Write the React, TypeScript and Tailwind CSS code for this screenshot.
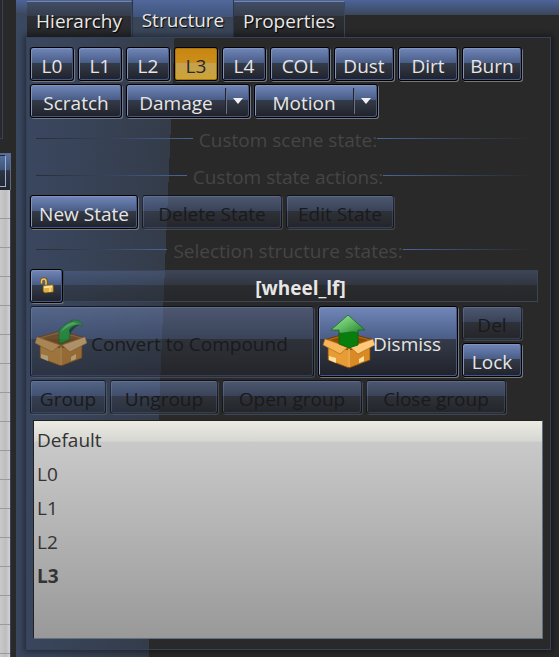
import type { ReactNode } from "react";
import { clsx } from "clsx";

const cell = "flex items-center justify-center rounded-[3px] border";
const raised =
  "border-black shadow-[inset_1px_1px_0_#7f93bd,inset_-1px_-1px_0_#42588a,1px_1px_0_#77777a,-1px_0_0_#333b4a]";
const face =
  "bg-[linear-gradient(#7187b8_0%,#4a5d88_46%,#343b49_47%,#20222a_100%)] text-[#e6e6e6]";
const faceActive =
  "border-black bg-[linear-gradient(#c8860f_0%,#cb8f1c_46%,#c4a153_47%,#cda433_100%)] text-[#26292e] shadow-[inset_0_0_0_1px_#a87510,1px_1px_0_#555]";
const faceDisabled =
  "border-[#00000080] bg-[linear-gradient(#7187b880_0%,#4a5d8880_46%,#343b4980_47%,#20222a80_100%)] text-[#191a1c] shadow-[inset_1px_1px_0_#7f93bd50,inset_-1px_-1px_0_#42588a80,1px_1px_0_#77777a60]";

type KeyProps = {
  children?: ReactNode;
  width: string;
  height?: string;
  active?: boolean;
  disabled?: boolean;
  align?: string;
  label?: string;
};

function Key({ children, width, height = "h-[34px]", active, disabled, align = "justify-center pt-[3px]", label }: KeyProps) {
  return (
    <button
      type="button"
      disabled={disabled}
      aria-label={label}
      aria-pressed={active}
      className={clsx(
        "flex shrink-0 items-center rounded-[3px] border whitespace-nowrap",
        width,
        height,
        align,
        active ? faceActive : disabled ? faceDisabled : [raised, face]
      )}
    >
      {children}
    </button>
  );
}

function SplitKey({ children }: { children: string }) {
  return (
    <div className={clsx(cell, raised, face, "h-[34px] w-[124px] shrink-0")}>
      <button type="button" className="h-full grow pt-[3px]">
        {children}
      </button>
      <span className="h-[26px] w-[2px] border-l border-[#20242c] bg-[#68728a]" />
      <button type="button" aria-label={`${children} options`} className="flex h-full w-[22px] items-center justify-center">
        <svg width="10" height="6" viewBox="0 0 10 6">
          <path d="M0 0H10L5 6Z" fill="#f0f0f0" />
        </svg>
      </button>
    </div>
  );
}

function Divider({ children }: { children: string }) {
  return (
    <div className="mr-[13px] ml-[6px] flex h-[36px] items-center text-[#454545]">
      <span className="mb-[3px] h-px grow bg-linear-to-r from-[#2b2e33] via-[#364460] to-[#4a659a]" />
      <span className="pl-[6px]">{children}</span>
      <span className="mb-[3px] h-px grow bg-linear-to-r from-[#4a659a] via-[#364460] to-transparent" />
    </div>
  );
}

function Padlock() {
  return (
    <svg width="16" height="18" viewBox="0 0 16 18">
      <path d="M2.5 7V4.5C2.5 0.8 7.5 0.8 7.5 4.5V9" fill="none" stroke="#7a5918" strokeWidth="3" />
      <path d="M2.5 6.5V4.5C2.5 1 7 1 7 4.5V9" fill="none" stroke="#e8c774" strokeWidth="1.5" />
      <path d="M4 8.5L13.5 7.5L14.5 9V15L6 16L4 14.5Z" fill="#dfb048" stroke="#6b4b10" strokeWidth="0.7" />
      <path d="M5 9.5L13 8.7V10.5L5 11.3Z" fill="#fbe8a8" />
      <path d="M11 9V15" stroke="#f7dd8c" strokeWidth="1.5" />
    </svg>
  );
}

function CrateBack() {
  return (
    <>
      <path d="M2 26L26 19L52 26L27 36Z" fill="#b86c10" stroke="#6a3b08" />
      <path d="M8 26L26 21L46 26L27 33Z" fill="#8a4c06" />
    </>
  );
}

function CrateFront() {
  return (
    <>
      <path d="M6 30L27 36V54L6 46Z" fill="#e79c35" stroke="#7b470d" strokeWidth="0.8" />
      <path d="M48 30L27 36V54L48 46Z" fill="#d98a25" stroke="#7b470d" strokeWidth="0.8" />
      <path d="M7 42L14 44V49L7 46Z" fill="#ffe09a" />
      <path d="M37 45L42 42V47L37 49Z" fill="#ffe09a" />
      <path d="M3 25L26 33L18 40L1 31Z" fill="#f6b558" stroke="#a5641b" strokeWidth="0.6" />
      <path d="M51 25L28 33L36 40L53 31Z" fill="#ffc97a" stroke="#a5641b" strokeWidth="0.6" />
      <path d="M27 35V53" stroke="#f8bb62" strokeWidth="1.5" />
    </>
  );
}

function PackIcon() {
  return (
    <svg width="54" height="56" viewBox="0 0 54 56" className="-mt-[4px] shrink-0 opacity-60">
      <CrateBack />
      <CrateFront />
      <path
        d="M25 31V19C29 13 34 10 39 10L36 9C41 7 46 8 49 14L45 13C39 14 36 18 35 28L28 31Z"
        fill="#18a61e"
        stroke="#0b6a12"
        strokeWidth="0.8"
      />
      <path d="M39 10C34 11 29 15 27 20C32 16 38 12 44 12Z" fill="#57cf55" />
      <path d="M45 13C40 16 37 19 36 23L35 18C38 14 41 13 45 13Z" fill="#10330f" />
    </svg>
  );
}

function UnpackIcon() {
  return (
    <svg width="54" height="56" viewBox="0 0 54 56" className="shrink-0">
      <defs>
        <linearGradient id="arrowHead" x1="0" y1="0" x2="1" y2="1">
          <stop offset="0" stopColor="#a5eba0" />
          <stop offset="0.5" stopColor="#63bd64" />
          <stop offset="1" stopColor="#1f7d2b" />
        </linearGradient>
      </defs>
      <CrateBack />
      <CrateFront />
      <path d="M17 15H36V31L27 34L17 30Z" fill="#087f0c" stroke="#0a5d10" strokeWidth="0.8" />
      <path d="M26 1L43 16H36V19C30 16 24 20 17 19V16H9Z" fill="url(#arrowHead)" stroke="#176a20" strokeWidth="0.8" />
    </svg>
  );
}

function Tab({ children, active, width }: { children: string; active?: boolean; width: string }) {
  return (
    <button
      type="button"
      role="tab"
      aria-selected={!!active}
      className={clsx(
        width,
        "shrink-0 pt-[3px] text-[#e8e8e8] [text-shadow:1px_1px_1px_#000]",
        active
          ? "h-[37px] border-x border-[#2b364b] bg-[linear-gradient(#50689a_0%,#40547c_45%,#3a4658_46%,#3a4658_100%)]"
          : "h-[36px] border-t border-r border-t-[#7486ac] border-r-[#3c4860] bg-[linear-gradient(#414e66_0%,#353d4b_40%,#2d2f35_41%,#262729_100%)]"
      )}
    >
      {children}
    </button>
  );
}

const states = ["Default", "L0", "L1", "L2", "L3"];

export default function App() {
  return (
    <div className="flex min-h-screen overflow-hidden bg-[#292929] font-['Open_Sans','Noto_Sans',sans-serif] text-[19px] leading-[26px]">
      <aside className="flex w-[16px] shrink-0 flex-col">
        <div className="h-[139px] w-[3px] border-r border-b border-[#34435b]" />
        <div className="mt-[14px] h-[37px] w-[11px] border-t border-r border-[#5b6b86] bg-[linear-gradient(#5871a3_0%,#3f5379_45%,#2c3546_46%,#22262e_100%)] pt-px pr-[4px] pb-[3px]">
          <div className="h-full border-t border-r border-b border-[#9fb0cc] border-t-[#1d2738]" />
        </div>
        <div className="w-[11px] grow border-r border-[#34435b] bg-[repeating-linear-gradient(transparent_0px,transparent_28px,#9a9a9a_28px,#9a9a9a_29px),linear-gradient(90deg,#c9c9c9,#bdbdbd_60%,#d5d5d5)]" />
      </aside>

      <main className="flex min-w-0 grow flex-col bg-[linear-gradient(#4d6499,#3a4659),linear-gradient(92.4deg,#3a4860_0px,#38445a_60px,#343c49_160px,#292929_160px)] bg-[length:100%_15px,100%_100%] bg-no-repeat pr-[8px] pb-[7px] pl-[10px]">
        <div role="tablist" className="flex h-[37px] items-end pl-px">
          <Tab width="w-[105px]">Hierarchy</Tab>
          <Tab width="w-[102px]" active>
            Structure
          </Tab>
          <Tab width="w-[111px]">Properties</Tab>
        </div>

        <section className="flex grow flex-col border border-[#34435b] px-[3px] pt-[9px] pb-[10px] shadow-[0_0_6px_2px_#0006]">
          <div className="flex gap-[4px]">
            <Key width="w-[44px]">L0</Key>
            <Key width="w-[44px]">L1</Key>
            <Key width="w-[44px]">L2</Key>
            <Key width="w-[44px]" active>
              L3
            </Key>
            <Key width="w-[44px]">L4</Key>
            <Key width="w-[60px]">COL</Key>
            <Key width="w-[60px]">Dust</Key>
            <Key width="w-[60px]">Dirt</Key>
            <Key width="w-[60px]">Burn</Key>
          </div>
          <div className="mt-[3px] mb-[4px] flex gap-[4px]">
            <Key width="w-[92px]">Scratch</Key>
            <SplitKey>Damage</SplitKey>
            <SplitKey>Motion</SplitKey>
          </div>

          <div className="flex flex-col gap-px">
            <Divider>Custom scene state:</Divider>
            <Divider>Custom state actions:</Divider>
          </div>
          <div className="mb-[4px] flex gap-[4px]">
            <Key width="w-[108px]">New State</Key>
            <Key width="w-[140px]" disabled>
              Delete State
            </Key>
            <Key width="w-[108px]" disabled>
              Edit State
            </Key>
          </div>
          <Divider>Selection structure states:</Divider>

          <div className="mr-[9px] flex items-center">
            <Key width="w-[33px]" align="justify-center" label="Unlock selection">
              <Padlock />
            </Key>
            <div className="flex h-[32px] grow items-center justify-center border border-[#3c4555] bg-[linear-gradient(#596f9c66_0%,#4a5d8840_46%,#2c2f3666_47%,#2224286b_100%)] pt-[3px] font-bold text-[#e6e6e6]">
              [wheel_lf]
            </div>
          </div>

          <div className="mt-[3px] flex gap-[4px]">
            <Key width="w-[284px]" height="h-[71px]" align="justify-start pl-[3px]" disabled>
              <PackIcon />
              <span className="pt-[4px] pl-[3px]">Convert to Compound</span>
            </Key>
            <Key width="w-[140px]" height="h-[71px]" align="justify-start pl-[3px]">
              <UnpackIcon />
              <span className="-ml-[3px] pt-[4px]">Dismiss</span>
            </Key>
            <div className="flex flex-col gap-[3px]">
              <Key width="w-[60px]" disabled>
                Del
              </Key>
              <Key width="w-[60px]">Lock</Key>
            </div>
          </div>

          <div className="mt-[3px] flex gap-[4px]">
            <Key width="w-[76px]" disabled>
              Group
            </Key>
            <Key width="w-[108px]" disabled>
              Ungroup
            </Key>
            <Key width="w-[140px]" disabled>
              Open group
            </Key>
            <Key width="w-[140px]" disabled>
              Close group
            </Key>
          </div>

          <select
            size={6}
            aria-label="Selection structure states"
            className="mr-[4px] ml-[3px] mt-[6px] block grow appearance-none overflow-hidden border border-t-[#222] border-r-[#607080] border-b-[#607080] border-l-[#222] bg-[linear-gradient(#ecebe4_0px,#d7d7d2_20px,#c9c9c9_21px,#999999_100%)] p-0 pt-[2px] text-[#333] outline-none"
          >
            {states.map((name) => (
              <option key={name} className={clsx("h-[34px] px-[3px] py-[4px]", name === "L3" && "font-bold")}>
                {name}
              </option>
            ))}
          </select>
        </section>
      </main>
    </div>
  );
}
